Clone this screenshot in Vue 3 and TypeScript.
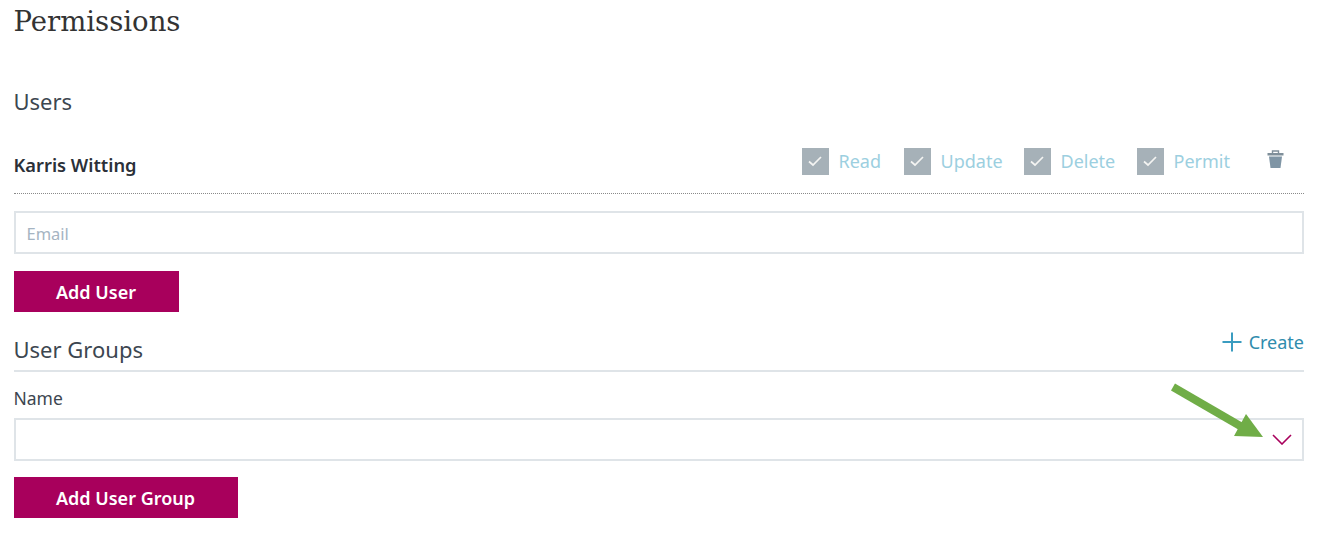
<template>
  <div class="page">
    <h1 class="title">Permissions</h1>

    <section class="users">
      <h2 class="section-title">Users</h2>
      <div class="user-row">
        <span class="user-name">Karris Witting</span>
        <div class="perms">
          <label v-for="p in perms" :key="p.name" class="perm" :style="{ width: p.width + 'px' }">
            <span class="check">
              <svg width="16" height="14" viewBox="0 0 16 14">
                <path d="M2 7.5 L6 11 L14 3" fill="none" stroke="#f4f4f2" stroke-width="1.7" />
              </svg>
            </span>
            <span class="perm-text">{{ p.name }}</span>
          </label>
          <svg class="trash" width="17" height="18" viewBox="0 0 17 18">
            <path d="M5.5 3 V1 H11.5 V3" fill="none" stroke="#7f8f9a" stroke-width="1.4" />
            <rect x="0.5" y="3" width="16" height="2.5" fill="#7f8f9a" />
            <path d="M2 6.5 H15 L13.5 18 H3.5 Z" fill="#7f95a5" />
          </svg>
        </div>
      </div>
      <div class="input email">Email</div>
      <button class="btn btn-user" type="button">Add User</button>
    </section>

    <section class="groups">
      <div class="groups-head">
        <h2 class="section-title">User Groups</h2>
        <a class="create">
          <svg width="20" height="20" viewBox="0 0 20 20">
            <path d="M10 0.5 V19.5 M0.5 10 H19.5" stroke="#3a9cc0" stroke-width="2" />
          </svg>
          Create
        </a>
      </div>
      <div class="field-label">Name</div>
      <div class="input select">
        <svg width="20" height="11" viewBox="0 0 20 11">
          <path d="M1 1 L10 10 L19 1" fill="none" stroke="#a8005c" stroke-width="1.6" />
        </svg>
      </div>
      <button class="btn btn-group" type="button">Add User Group</button>
    </section>

    <!-- annotation arrow on top of the screenshot -->
    <svg class="arrow" width="100" height="60" viewBox="0 0 100 60">
      <path d="M3 5 L72 45" fill="none" stroke="#70ad47" stroke-width="8" />
      <path d="M76 32 L93 55 L64 54 Z" fill="#70ad47" />
    </svg>
  </div>
</template>

<script setup lang="ts">
interface Perm {
  name: string
  width: number
}

const perms: Perm[] = [
  { name: 'Read', width: 102 },
  { name: 'Update', width: 120 },
  { name: 'Delete', width: 113 },
  { name: 'Permit', width: 130 }
]
</script>

<style>
html,
body {
  margin: 0;
  background: #fff;
}
</style>

<style scoped>
.page {
  position: relative;
  box-sizing: border-box;
  width: 1318px;
  height: 533px;
  padding: 0 14px 0 13.5px;
  overflow: hidden;
  font-family: "Noto Sans", "Open Sans", sans-serif;
  color: #333c45;
}

.title {
  margin: 0;
  padding-top: 3px;
  height: 40px;
  font-family: "DejaVu Serif", serif;
  font-weight: 400;
  font-size: 27.5px;
  line-height: 36px;
  color: #333;
}

.section-title {
  margin: 0;
  font-weight: 400;
  font-size: 22px;
  line-height: 30px;
  color: #3c4650;
}

.users {
  padding-top: 43px;
}

.user-row {
  display: flex;
  justify-content: space-between;
  align-items: flex-start;
  height: 46px;
  margin-top: 31px;
  border-bottom: 1px dotted #8a8a8a;
}

.user-name {
  margin-top: 6px;
  font-size: 18.3px;
  font-weight: 600;
  line-height: 24px;
  color: #2b3038;
}

.perms {
  display: flex;
  align-items: flex-start;
  margin-right: 20.5px;
}

.perm {
  display: flex;
  align-items: center;
  gap: 10px;
  height: 28px;
}

.check {
  display: flex;
  align-items: center;
  justify-content: center;
  width: 27px;
  height: 27px;
  background: #a6b1b8;
}

.perm-text {
  font-size: 18px;
  color: #9ccfe0;
}

.trash {
  margin-top: 3px;
}

.input {
  box-sizing: border-box;
  height: 43px;
  background: #fff;
  border: 2px solid #dfe4e8;
}

.email {
  margin-top: 17px;
  padding-left: 11px;
  font-size: 16.5px;
  line-height: 42px;
  color: #a5b4c2;
}

.btn {
  display: block;
  height: 41px;
  padding: 0;
  border: none;
  background: #a8005c;
  color: #fff;
  font-family: inherit;
  font-size: 18px;
  font-weight: 600;
}

.btn-user {
  width: 165px;
  margin-top: 17px;
}

.btn-group {
  width: 224px;
  margin-top: 16px;
}

.groups {
  margin-top: 22px;
}

.groups-head {
  display: flex;
  justify-content: space-between;
  height: 36px;
  border-bottom: 2px solid #dfe4e8;
}

.create {
  display: flex;
  align-items: center;
  gap: 7px;
  height: 22px;
  margin-top: -3px;
  font-size: 18px;
  color: #2f8cad;
}

.field-label {
  margin-top: 14px;
  font-size: 17.5px;
  line-height: 24px;
  color: #3c4650;
}

.select {
  display: flex;
  align-items: center;
  justify-content: flex-end;
  margin-top: 8px;
  padding-right: 10px;
}

.arrow {
  position: absolute;
  left: 1170px;
  top: 382px;
}
</style>
